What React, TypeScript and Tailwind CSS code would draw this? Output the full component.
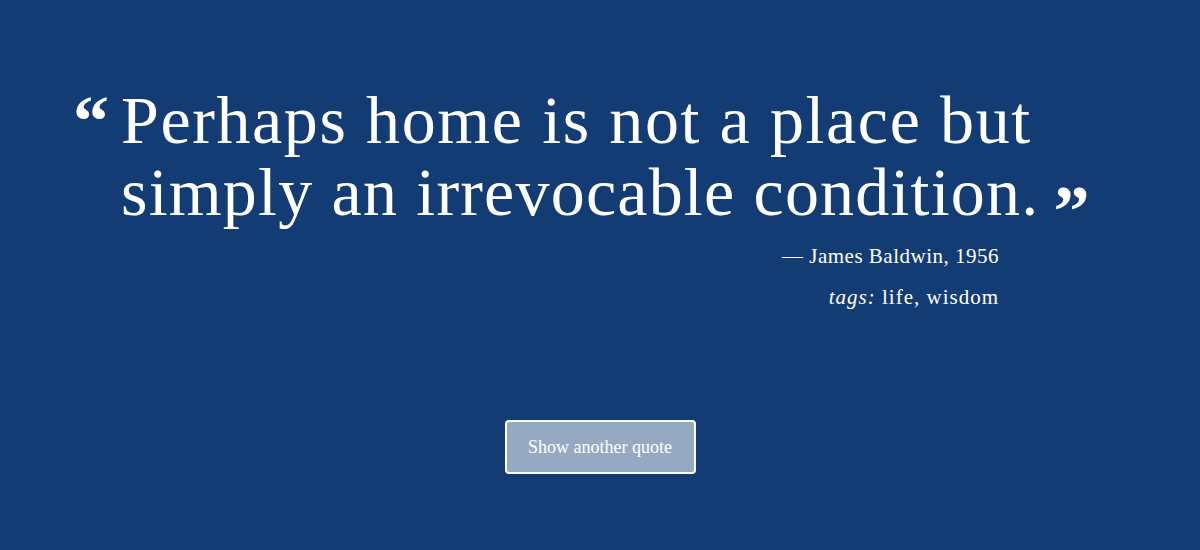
export default function App() {
  return (
    <div className="w-[1200px] h-[550px] bg-[#143c74] text-white overflow-hidden" style={{ fontFamily: '"Liberation Serif", serif' }}>
      <div className="pt-[86px] pl-[73px] flex items-start">
        <span className="text-[72px] leading-none font-bold mr-[12px] -mt-[1px]">“</span>
        <p className="text-[68px] leading-[69px] tracking-[1.6px]">
          Perhaps home is not a place but<br />
          <span className="tracking-[1.2px]">simply an irrevocable condition.</span>
          <span className="relative top-[20px] text-[72px] leading-none font-bold tracking-normal ml-[14px]">”</span>
        </p>
      </div>
      <div className="w-[999px] flex flex-col items-end text-[21px] leading-[24px]">
        <p className="mt-[17px] tracking-[0.5px]">— James Baldwin, 1956</p>
        <p className="mt-[17px] tracking-[1px]"><em>tags:</em> life, wisdom</p>
      </div>
      <div className="flex justify-center mt-[111px]">
        <button className="w-[191px] h-[54px] bg-[#96a9c3] border-2 border-white rounded-[4px] text-[18px] text-white">Show another quote</button>
      </div>
    </div>
  );
}
